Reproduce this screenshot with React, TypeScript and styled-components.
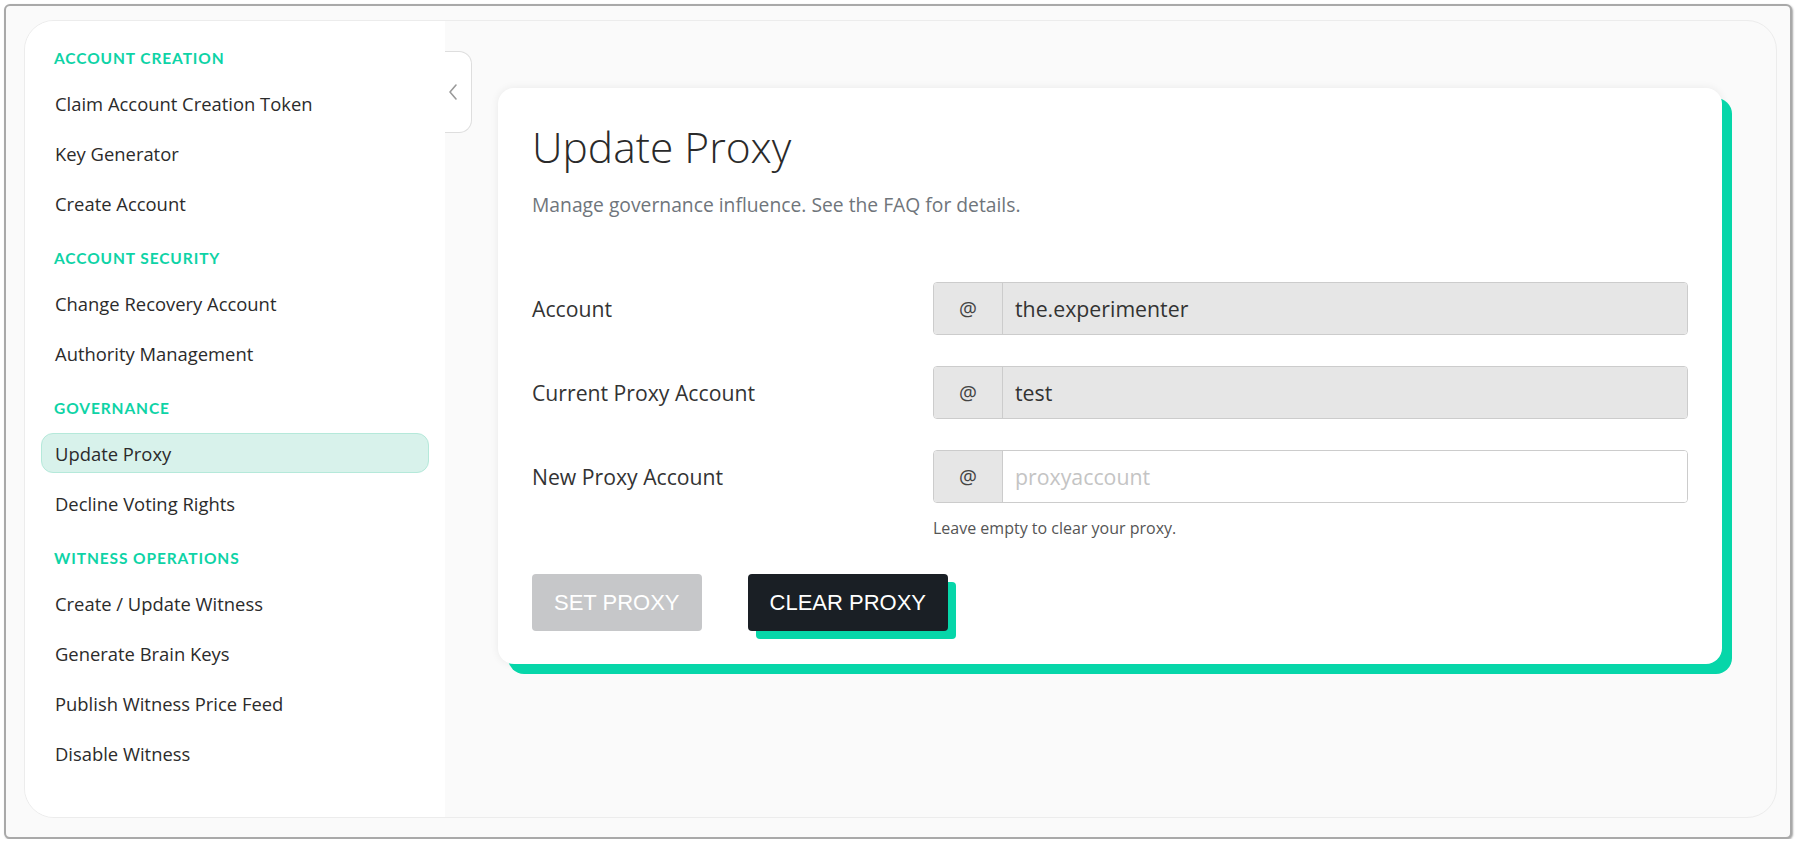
import styled, { createGlobalStyle } from "styled-components";

const GlobalStyle = createGlobalStyle`
  html, body {
    margin: 0;
    padding: 0;
    background: #ffffff;
  }
  * {
    box-sizing: border-box;
  }
`;

const Frame = styled.div`
  margin: 4px 0 0 4px;
  width: 1788px;
  height: 835px;
  border: 2px solid #a9a9a9;
  border-radius: 6px;
  box-shadow: 1px 1px 2px rgba(0, 0, 0, 0.35);
  background: #fafafa;
  padding: 14px 0 0 18px;
  font-family: "Open Sans", "Liberation Sans", sans-serif;
`;

const Shell = styled.div`
  width: 1753px;
  height: 798px;
  display: flex;
  border: 1px solid #ececec;
  border-radius: 30px;
  overflow: hidden;
  background: #fafafa;
`;

const Sidebar = styled.nav`
  width: 420px;
  flex-shrink: 0;
  background: #ffffff;
  padding: 27px 16px;
  display: flex;
  flex-direction: column;
  gap: 25px;
`;

const Section = styled.div`
  display: flex;
  flex-direction: column;
  gap: 10px;
`;

const SectionTitle = styled.div`
  padding-left: 13px;
  margin-bottom: 5px;
  height: 20px;
  line-height: 20px;
  font-family: "Lato", "Open Sans", sans-serif;
  font-size: 15.5px;
  font-weight: 700;
  letter-spacing: 0.9px;
  text-transform: uppercase;
  color: #0ed3a6;
`;

const NavItem = styled.a<{ $active?: boolean }>`
  display: flex;
  align-items: center;
  height: 40px;
  padding: 0 13px;
  border-radius: 12px;
  border: 1px solid ${(p) => (p.$active ? "#b5e9da" : "transparent")};
  background: ${(p) => (p.$active ? "#d8f2eb" : "transparent")};
  font-size: 18.4px;
  color: #2b2b2b;
  text-decoration: none;
  cursor: pointer;
`;

const Main = styled.main`
  position: relative;
  flex: 1;
  padding: 67px 54px 0 53px;
`;

const CollapseTab = styled.button`
  position: absolute;
  top: 30px;
  left: 0;
  width: 27px;
  height: 82px;
  padding: 0 0 0 2px;
  display: flex;
  align-items: center;
  justify-content: flex-start;
  background: #ffffff;
  border: 1px solid #dedede;
  border-left: none;
  border-radius: 0 13px 13px 0;
  cursor: pointer;
`;

const Card = styled.section`
  background: #ffffff;
  border-radius: 16px;
  padding: 33px 34px 33px 34px;
  box-shadow: 10px 10px 0 #06d6a9, 0 0 8px rgba(0, 0, 0, 0.07);
`;

const Title = styled.h1`
  margin: 0;
  font-size: 42.5px;
  line-height: 52px;
  font-weight: 300;
  color: #2a2a2a;
`;

const Subtitle = styled.p`
  margin: 18px 0 0;
  font-size: 19.3px;
  line-height: 27px;
  color: #6f757b;
`;

const Form = styled.div`
  margin-top: 64px;
  display: grid;
  grid-template-columns: 401px 1fr;
  row-gap: 31px;
  align-items: center;
`;

const Label = styled.label`
  font-size: 21.2px;
  color: #333333;
`;

const InputGroup = styled.div`
  display: flex;
  height: 53px;
  border: 1px solid #cccccc;
  border-radius: 4px;
  overflow: hidden;
`;

const Addon = styled.span`
  width: 69px;
  flex-shrink: 0;
  display: flex;
  align-items: center;
  justify-content: center;
  background: #e6e6e6;
  border-right: 1px solid #cccccc;
  font-size: 20px;
  color: #444444;
`;

const Field = styled.input<{ $readonly?: boolean }>`
  flex: 1;
  border: none;
  outline: none;
  padding: 0 12px;
  font-family: inherit;
  font-size: 21.3px;
  color: #333333;
  background: ${(p) => (p.$readonly ? "#e6e6e6" : "#ffffff")};
  &::placeholder {
    color: #c4c4c4;
  }
`;

const HelpRow = styled.div`
  grid-column: 2;
  margin-top: -17px;
  font-size: 16px;
  line-height: 22px;
  color: #555555;
`;

const Actions = styled.div`
  margin-top: 35px;
  display: flex;
  gap: 46px;
`;

const Button = styled.button<{ $primary?: boolean }>`
  height: 57px;
  padding: 0 22px;
  border: none;
  border-radius: 4px;
  font-family: "Liberation Sans", Arial, sans-serif;
  font-size: 22px;
  color: #ffffff;
  background: ${(p) => (p.$primary ? "#1a1f25" : "#c6c7c9")};
  box-shadow: ${(p) => (p.$primary ? "8px 8px 0 #06d6a9" : "none")};
  cursor: ${(p) => (p.$primary ? "pointer" : "default")};
`;

const sections = [
  {
    title: "Account Creation",
    items: ["Claim Account Creation Token", "Key Generator", "Create Account"],
  },
  {
    title: "Account Security",
    items: ["Change Recovery Account", "Authority Management"],
  },
  {
    title: "Governance",
    items: ["Update Proxy", "Decline Voting Rights"],
  },
  {
    title: "Witness Operations",
    items: [
      "Create / Update Witness",
      "Generate Brain Keys",
      "Publish Witness Price Feed",
      "Disable Witness",
    ],
  },
];

export default function App() {
  const active = "Update Proxy";

  return (
    <>
      <GlobalStyle />
      <Frame>
        <Shell>
          <Sidebar>
            {sections.map((section) => (
              <Section key={section.title}>
                <SectionTitle>{section.title}</SectionTitle>
                {section.items.map((item) => (
                  <NavItem key={item} $active={item === active}>
                    {item}
                  </NavItem>
                ))}
              </Section>
            ))}
          </Sidebar>

          <Main>
            <CollapseTab aria-label="Collapse menu">
              <svg width="12" height="18" viewBox="0 0 12 18" fill="none">
                <path d="M9 2 L3 9 L9 16" stroke="#9a9a9a" strokeWidth="1.6" strokeLinecap="round" strokeLinejoin="round" />
              </svg>
            </CollapseTab>

            <Card>
              <Title>Update Proxy</Title>
              <Subtitle>Manage governance influence. See the FAQ for details.</Subtitle>

              <Form>
                <Label>Account</Label>
                <InputGroup>
                  <Addon>@</Addon>
                  <Field $readonly readOnly value="the.experimenter" />
                </InputGroup>

                <Label>Current Proxy Account</Label>
                <InputGroup>
                  <Addon>@</Addon>
                  <Field $readonly readOnly value="test" />
                </InputGroup>

                <Label>New Proxy Account</Label>
                <InputGroup>
                  <Addon>@</Addon>
                  <Field placeholder="proxyaccount" />
                </InputGroup>

                <HelpRow>Leave empty to clear your proxy.</HelpRow>
              </Form>

              <Actions>
                <Button disabled>SET PROXY</Button>
                <Button $primary>CLEAR PROXY</Button>
              </Actions>
            </Card>
          </Main>
        </Shell>
      </Frame>
    </>
  );
}
